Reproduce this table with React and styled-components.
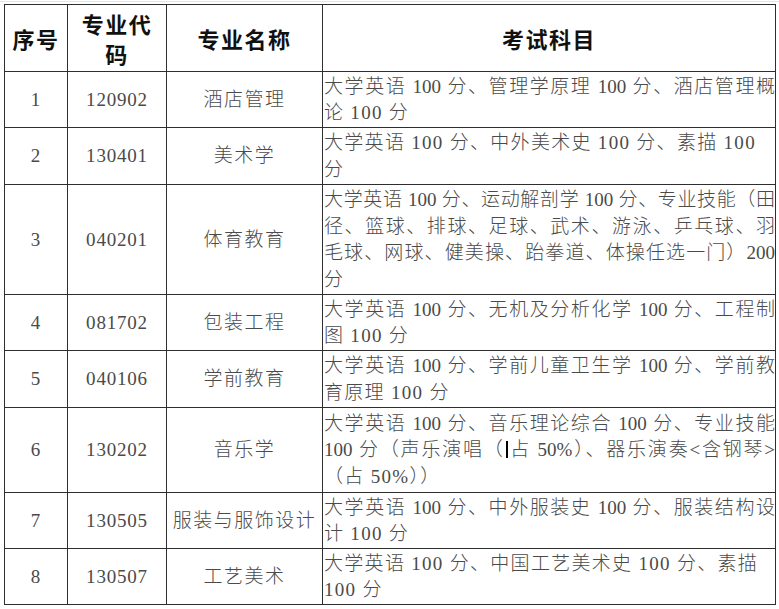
import React from "react";
import styled, { createGlobalStyle } from "styled-components";

const GlobalStyle = createGlobalStyle`
  html, body {
    margin: 0;
    padding: 0;
    background: #fff;
  }
  body {
    font-family: "Liberation Serif", "Noto Sans CJK SC", serif;
  }
`;

const ROWS = [
  {
    no: "1",
    code: "120902",
    name: "酒店管理",
    height: 56,
    lines: [
      { text: "大学英语 100 分、管理学原理 100 分、酒店管理概", justify: true },
      { text: "论 100 分" },
    ],
  },
  {
    no: "2",
    code: "130401",
    name: "美术学",
    height: 57,
    lines: [
      { text: "大学英语 100 分、中外美术史 100 分、素描 100" },
      { text: "分" },
    ],
  },
  {
    no: "3",
    code: "040201",
    name: "体育教育",
    height: 110,
    lines: [
      { text: "大学英语 100 分、运动解剖学 100 分、专业技能（田", justify: true },
      { text: "径、篮球、排球、足球、武术、游泳、乒乓球、羽", justify: true },
      { text: "毛球、网球、健美操、跆拳道、体操任选一门）200", justify: true },
      { text: "分" },
    ],
  },
  {
    no: "4",
    code: "081702",
    name: "包装工程",
    height: 56,
    lines: [
      { text: "大学英语 100 分、无机及分析化学 100 分、工程制", justify: true },
      { text: "图 100 分" },
    ],
  },
  {
    no: "5",
    code: "040106",
    name: "学前教育",
    height: 57,
    lines: [
      { text: "大学英语 100 分、学前儿童卫生学 100 分、学前教", justify: true },
      { text: "育原理 100 分" },
    ],
  },
  {
    no: "6",
    code: "130202",
    name: "音乐学",
    height: 85,
    lines: [
      { text: "大学英语 100 分、音乐理论综合 100 分、专业技能", justify: true },
      { text: "100 分（声乐演唱（|占 50%）、器乐演奏<含钢琴>", justify: true },
      { text: "（占 50%））" },
    ],
  },
  {
    no: "7",
    code: "130505",
    name: "服装与服饰设计",
    height: 56,
    lines: [
      { text: "大学英语 100 分、中外服装史 100 分、服装结构设", justify: true },
      { text: "计 100 分" },
    ],
  },
  {
    no: "8",
    code: "130507",
    name: "工艺美术",
    height: 56,
    lines: [
      { text: "大学英语 100 分、中国工艺美术史 100 分、素描" },
      { text: "100 分" },
    ],
  },
];

const Page = styled.div`
  border-top: 1px solid #e4e4e4;
  margin-top: 1px;
  padding: 2px 0 0 4px;
`;

const Table = styled.table`
  border-collapse: collapse;
  table-layout: fixed;
  width: 771px;
  border: 1px solid #2e2e2e;
`;

const Row = styled.tr`
  height: ${(props) => props.$height}px;
`;

const HeadCell = styled.th`
  border: 1px solid #2e2e2e;
  padding: 0;
  font-family: "Noto Sans CJK SC", sans-serif;
  font-size: 22px;
  font-weight: 700;
  letter-spacing: 1.5px;
  line-height: 30px;
  color: #111;
  text-align: center;
  vertical-align: middle;
`;

const Cell = styled.td`
  border: 1px solid #2e2e2e;
  padding: 0;
  font-size: 19px;
  font-weight: 300;
  letter-spacing: ${(props) => (props.$wide ? "1.5px" : "0.8px")};
  line-height: 26px;
  color: #4a4a4a;
  text-align: center;
  vertical-align: middle;
  white-space: nowrap;
`;

const ExamCell = styled.td`
  border: 1px solid #2e2e2e;
  padding: 1px 0 0 1px;
  font-size: 19px;
  font-weight: 300;
  line-height: 26.5px;
  color: #4a4a4a;
  vertical-align: middle;
`;

const Line = styled.div`
  white-space: nowrap;
  letter-spacing: ${(props) => (props.$justify ? "0" : "1.3px")};
  text-align: ${(props) => (props.$justify ? "justify" : "left")};
  text-align-last: ${(props) => (props.$justify ? "justify" : "left")};
`;

const Caret = styled.span`
  display: inline-block;
  width: 2px;
  height: 17px;
  margin: 0 1px;
  background: #000;
  vertical-align: -2px;
`;

function renderLine(text) {
  if (!text.includes("|")) return text;
  const [before, after] = text.split("|");
  return (
    <>
      {before}
      <Caret />
      {after}
    </>
  );
}

export default function App() {
  return (
    <>
      <GlobalStyle />
      <Page lang="zh-CN">
        <Table>
          <colgroup>
            <col style={{ width: 63 }} />
            <col style={{ width: 99 }} />
            <col style={{ width: 156 }} />
            <col style={{ width: 453 }} />
          </colgroup>
          <thead>
            <Row $height={67}>
              <HeadCell>序号</HeadCell>
              <HeadCell>
                专业代
                <br />码
              </HeadCell>
              <HeadCell>专业名称</HeadCell>
              <HeadCell>考试科目</HeadCell>
            </Row>
          </thead>
          <tbody>
            {ROWS.map((row) => (
              <Row key={row.no} $height={row.height}>
                <Cell>{row.no}</Cell>
                <Cell>{row.code}</Cell>
                <Cell $wide>{row.name}</Cell>
                <ExamCell>
                  {row.lines.map((line, i) => (
                    <Line key={i} $justify={line.justify}>
                      {renderLine(line.text)}
                    </Line>
                  ))}
                </ExamCell>
              </Row>
            ))}
          </tbody>
        </Table>
      </Page>
    </>
  );
}
